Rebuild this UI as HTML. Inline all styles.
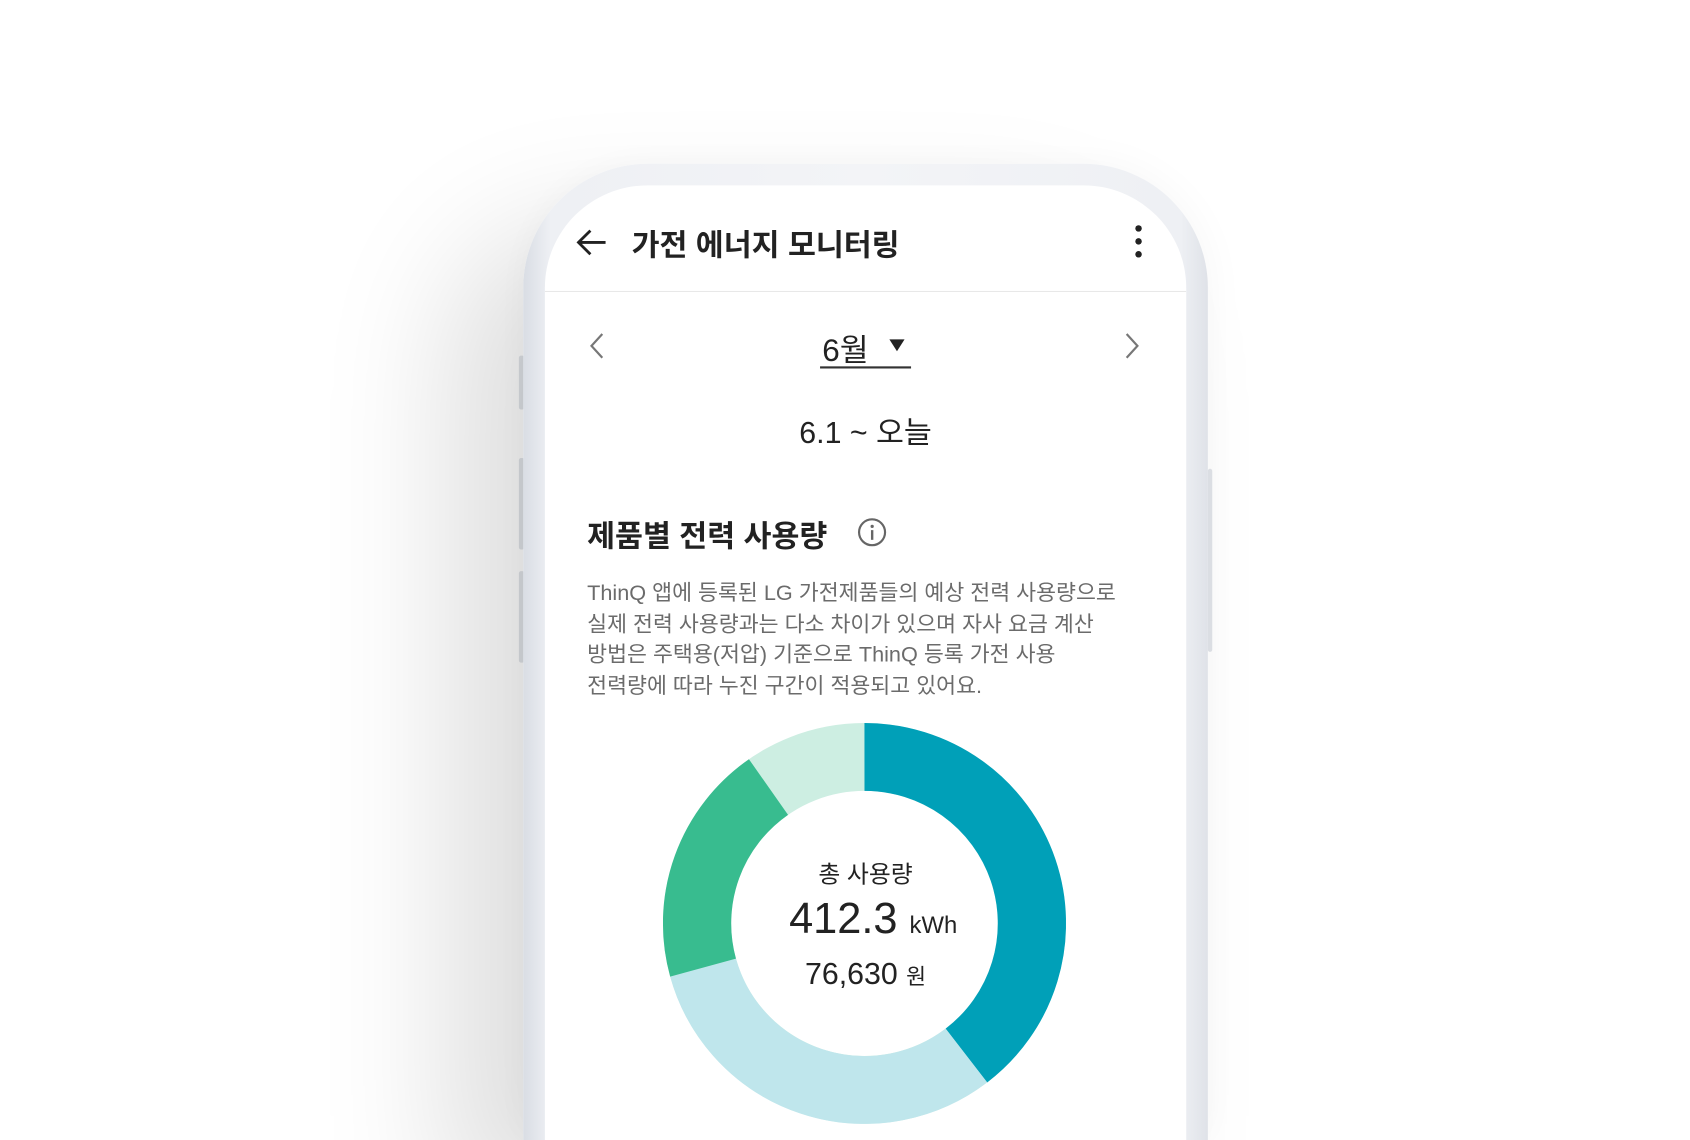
<!DOCTYPE html>
<html><head><meta charset="utf-8"><style>
html,body{margin:0;padding:0;width:1690px;height:1140px;overflow:hidden;background:#fff;}
#clip{position:relative;width:1690px;height:1140px;overflow:hidden;}
#w{position:absolute;left:0;top:0;width:1560px;height:1058px;transform:scale(1.0833,1.0775);transform-origin:0 0;font-family:"Liberation Sans","Noto Sans CJK KR",sans-serif;}
.frame{position:absolute;left:483px;top:152px;width:632px;height:906px;border-radius:115px 115px 0 0;background:linear-gradient(90deg,#d9dde4 0%,#eef0f4 4%,#f3f4f7 50%,#eef0f4 96%,#dfe2e8 100%);box-shadow:-70px 60px 140px rgba(0,0,0,0.13),0 0 40px rgba(0,0,0,0.04);}
.screen{position:absolute;left:503px;top:172px;width:592px;height:886px;border-radius:95px 95px 0 0;background:#fff;overflow:hidden;}
.btn{position:absolute;width:5px;background:#e2e5ea;border-radius:2px;}
.t{position:absolute;white-space:nowrap;color:#222;}
</style></head><body><div id="clip"><div id="w">
<div class="btn" style="left:479px;top:330px;height:50px"></div>
<div class="btn" style="left:479px;top:425px;height:85px"></div>
<div class="btn" style="left:479px;top:530px;height:85px"></div>
<div class="btn" style="left:1115px;top:435px;height:170px;width:4px"></div>
<div class="frame"></div>
<div class="screen">
 <svg style="position:absolute;left:28px;top:38px" width="32" height="30" viewBox="0 0 32 30"><path d="M28 15H4M14 4L3 15l11 11" fill="none" stroke="#222" stroke-width="2.6"/></svg>
 <div class="t" style="left:80px;top:34px;font-size:28px;font-weight:bold;">가전 에너지 모니터링</div>
 <div style="position:absolute;left:545px;top:37px;width:6px;height:6px;border-radius:3px;background:#222;box-shadow:0 12px 0 #222,0 24px 0 #222"></div>
 <div style="position:absolute;left:0;top:98px;width:592px;height:1px;background:#e8e8e8"></div>
 <svg style="position:absolute;left:40px;top:136px" width="16" height="26"><path d="M13 2L3 13l10 11" fill="none" stroke="#777" stroke-width="2"/></svg>
 <svg style="position:absolute;left:534px;top:136px" width="16" height="26"><path d="M3 2l10 11L3 24" fill="none" stroke="#777" stroke-width="2"/></svg>
 <div class="t" style="left:256px;top:130px;font-size:29px;">6월</div>
 <svg style="position:absolute;left:317px;top:142px" width="16" height="13"><path d="M1 1h14L8 12z" fill="#222"/></svg>
 <div style="position:absolute;left:254px;top:168px;width:84px;height:2px;background:#333"></div>
 <div class="t" style="left:0;width:592px;text-align:center;top:208px;font-size:28px;">6.1 ~ 오늘</div>
 <div class="t" style="left:39px;top:304px;font-size:28px;font-weight:bold;">제품별 전력 사용량</div>
 <svg style="position:absolute;left:288px;top:308px" width="28" height="28"><circle cx="14" cy="14" r="12" fill="none" stroke="#666" stroke-width="2"/><rect x="13" y="12" width="2.2" height="9" fill="#666"/><circle cx="14.1" cy="8.5" r="1.5" fill="#666"/></svg>
 <div class="t" style="left:39px;top:365px;font-size:20px;line-height:28.5px;color:#6b6b6b;">ThinQ 앱에 등록된 LG 가전제품들의 예상 전력 사용량으로<br>실제 전력 사용량과는 다소 차이가 있으며 자사 요금 계산<br>방법은 주택용(저압) 기준으로 ThinQ 등록 가전 사용<br>전력량에 따라 누진 구간이 적용되고 있어요.</div>
 <svg style="position:absolute;left:109px;top:499px" width="372" height="372" viewBox="-186 -186 372 372">
  <g fill="none" stroke-width="63">
   <circle r="154.5" stroke="#cdeee2"/>
   <path d="M0 -154.5A154.5 154.5 0 0 1 94.1 122.6" stroke="#00a0b8"/>
   <path d="M94.1 122.6A154.5 154.5 0 0 1 -149 41" stroke="#bfe6ec"/>
   <path d="M-149 41A154.5 154.5 0 0 1 -88.6 -126.6" stroke="#38bc8f"/>
  </g>
 </svg>
 <div class="t" style="left:0;width:592px;text-align:center;top:622px;font-size:22px;">총 사용량</div>
 <div class="t" style="left:0;width:592px;text-align:center;top:659px;font-size:40px;padding-left:14px;box-sizing:border-box;">412.3 <span style="font-size:22px">kWh</span></div>
 <div class="t" style="left:0;width:592px;text-align:center;top:716px;font-size:28px;">76,630 <span style="font-size:20px">원</span></div>
</div>
</div></div></body></html>
